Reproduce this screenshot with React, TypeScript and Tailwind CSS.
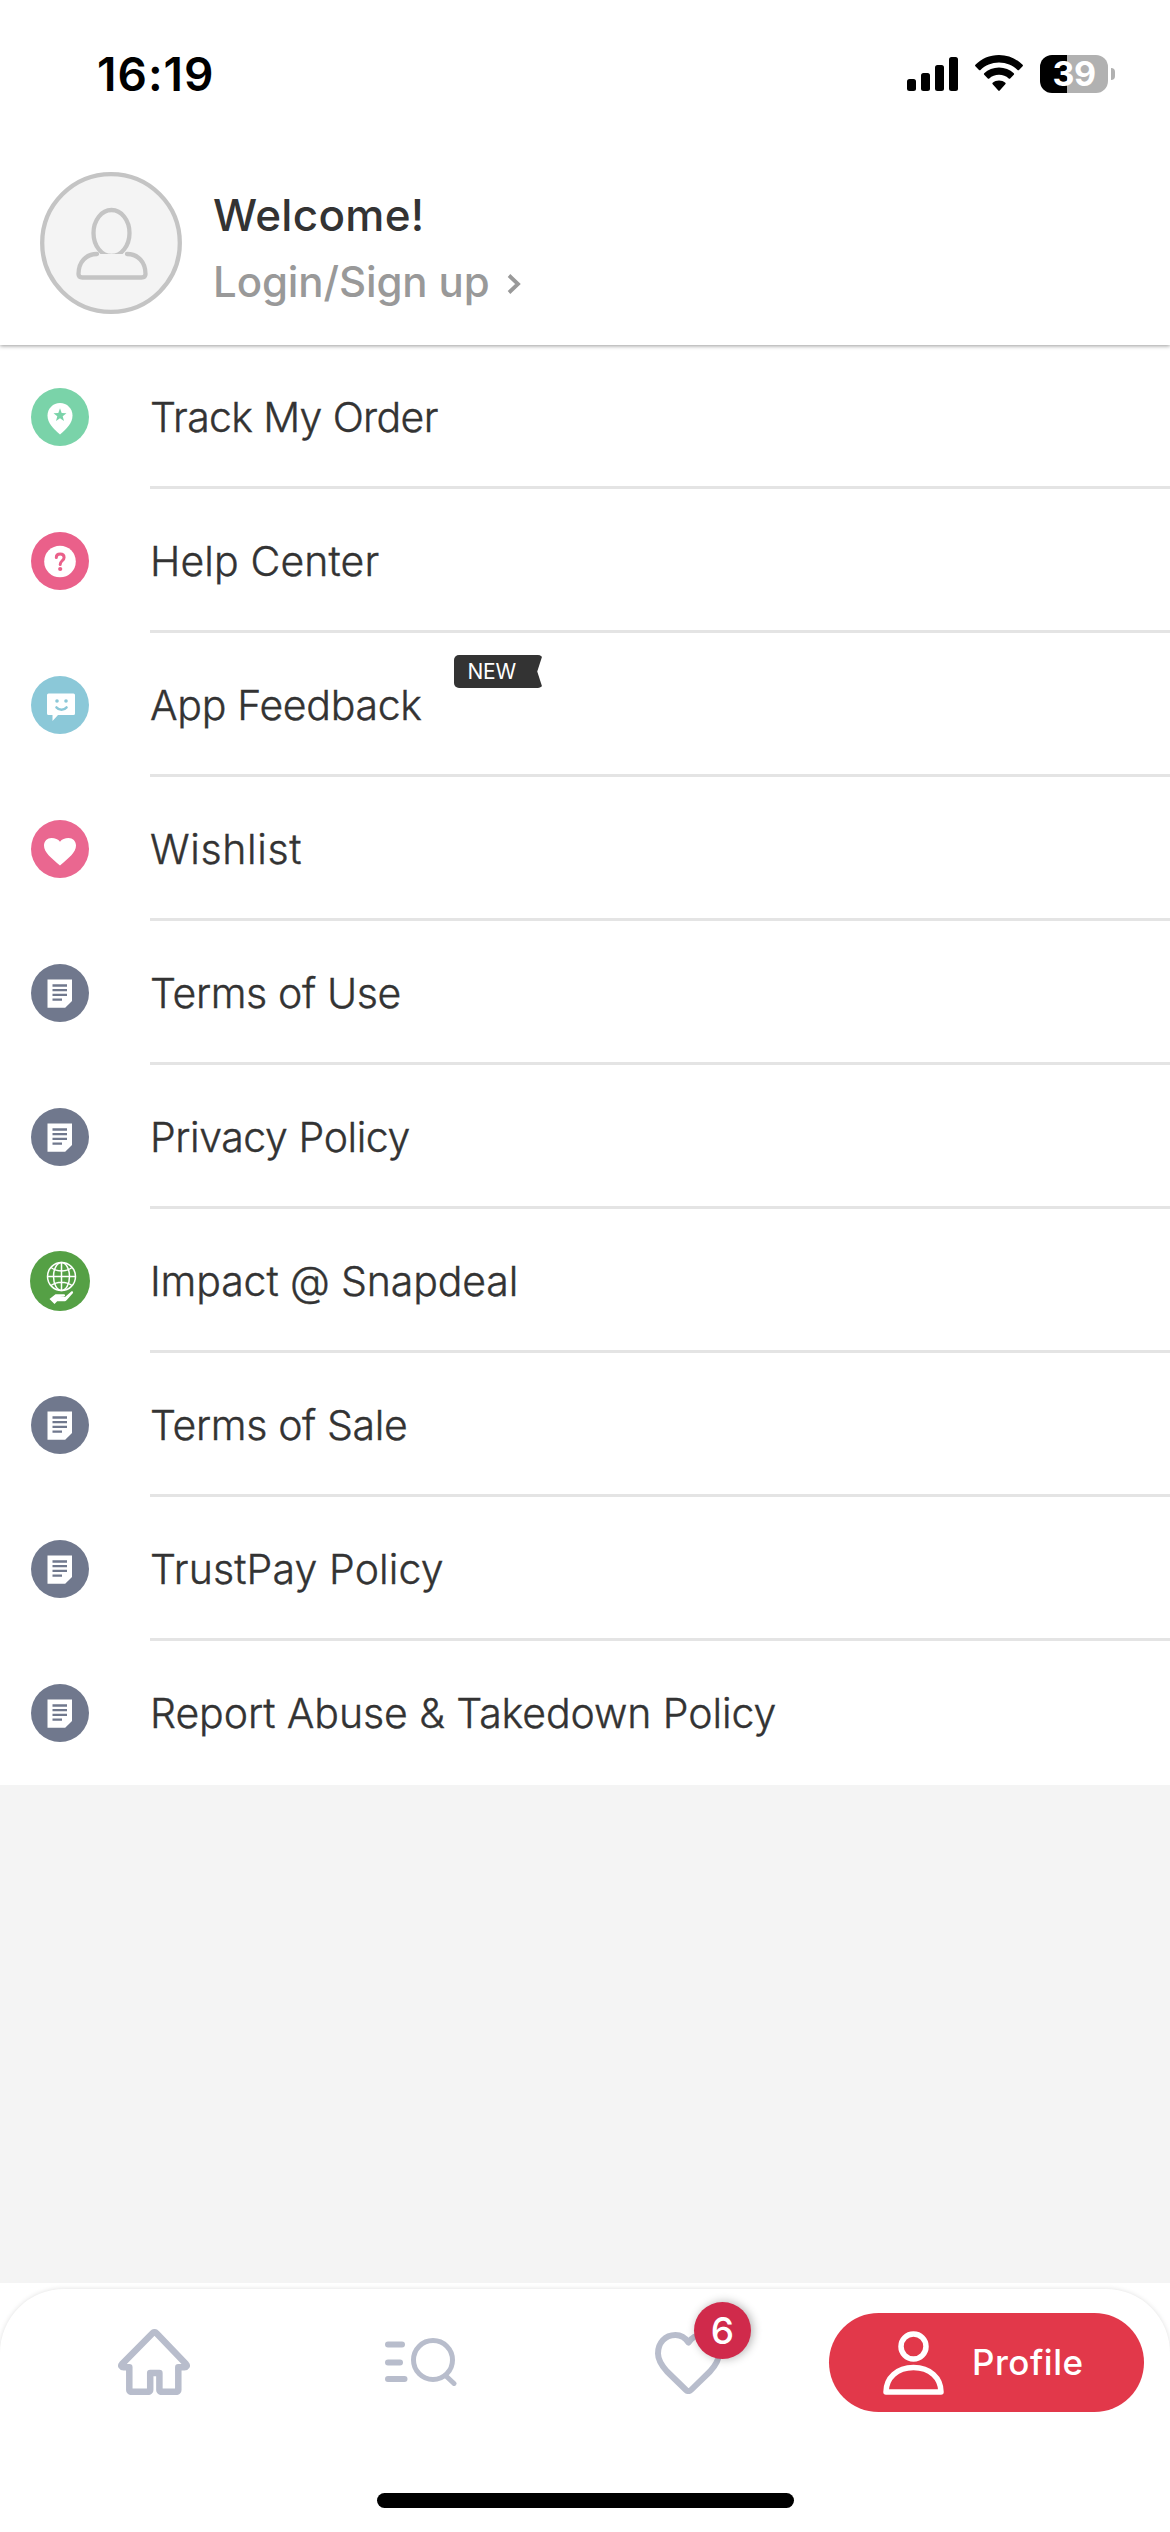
import type { ReactNode } from 'react';

const PinIcon = () => <svg viewBox="0 0 58 58" className="h-[58px] w-[58px]">
    <circle cx="29" cy="29" r="29" fill="#7ad3a9" />
    <path d="M29 15c-7 0-12.500 5.500-12.500 12.500C16.500 35 22 40.500 29 46.500 36 40.500 41.500 35 41.500 27.500 41.500 20.500 36 15 29 15z" fill="#fff" />
    <path d="M29 20.300l1.700 4.700 4.800.2-3.800 3 1.300 4.900-4-2.900-4 2.900 1.300-4.900-3.800-3 4.800-.2z" fill="#7ad3a9" />
  </svg>;

const HelpIcon = () => <svg viewBox="0 0 58 58" className="h-[58px] w-[58px]">
    <circle cx="29" cy="29" r="29" fill="#ea608a" />
    <circle cx="29" cy="29.500" r="15.800" fill="#fff" />
    <path d="M25.300 25.500c0-2.200 1.500-3.600 3.900-3.600 2.300 0 3.900 1.400 3.900 3.500 0 3.200-3.900 3.600-3.900 7" fill="none" stroke="#ea608a" strokeWidth="3" strokeLinecap="round" />
    <circle cx="29.200" cy="37" r="2.100" fill="#ea608a" />
  </svg>;

const FeedbackIcon = () => <svg viewBox="0 0 58 58" className="h-[58px] w-[58px]">
    <circle cx="29" cy="29" r="29" fill="#8bc8d8" />
    <path d="M17.500 17.500h25a1.500 1.500 0 0 1 1.500 1.500v18.500a1.500 1.500 0 0 1-1.500 1.500H27l-5.500 6V39h-4a1.500 1.500 0 0 1-1.500-1.500V19a1.500 1.500 0 0 1 1.500-1.500z" fill="#fff" />
    <circle cx="26" cy="25" r="1.800" fill="#8bc8d8" />
    <circle cx="35" cy="25" r="1.800" fill="#8bc8d8" />
    <path d="M25.500 31.500c2.500 3 7.500 3 10 0" fill="none" stroke="#8bc8d8" strokeWidth="2.600" strokeLinecap="round" />
  </svg>;

const WishlistIcon = () => <svg viewBox="0 0 58 58" className="h-[58px] w-[58px]">
    <circle cx="29" cy="29" r="29" fill="#ea6790" />
    <path d="M29 45.500C20 37.500 13 32.500 13 25.500c0-4.500 3.300-7.500 7.500-7.500 3.500 0 6.700 1.300 8.500 3.700 1.800-2.400 5-3.700 8.500-3.700 4.200 0 7.500 3 7.500 7.500C45 32.500 38 37.500 29 45.500z" fill="#fff" />
  </svg>;

const DocumentIcon = () => <svg viewBox="0 0 58 58" className="h-[58px] w-[58px]">
    <circle cx="29" cy="29" r="29" fill="#70788d" />
    <path d="M16.500 15.500h24.500v21.500l-6.800 6.800H16.500z" fill="#fff" />
    <path d="M21.500 21.500h14.500M21.500 26.200h14.500M21.500 30.900h14.500M21.500 35.600h9.500" stroke="#70788d" strokeWidth="2.300" />
  </svg>;

const ImpactIcon = () => <svg viewBox="0 0 60 60" className="h-[60px] w-[60px]">
    <circle cx="30" cy="30" r="30" fill="#55a045" />
    <g fill="none" stroke="#fff" strokeWidth="1.500">
      <circle cx="31.500" cy="25.500" r="14" />
      <ellipse cx="31.500" cy="25.500" rx="8" ry="14" />
      <path d="M31.500 11.500v28M17.500 25.500h28M21 16.500c6 4.500 15 4.500 21 0M21 34.500c6-4.500 15-4.500 21 0" />
    </g>
    <path d="M19.500 48l6-4.800h8c2 0 2.200 2.300.2 2.500l-4 .3h5.300l6-5.300c1.500-1 2.700.2 1.800 1.600l-6 6.700c-.8.900-1.400 1.200-2.600 1.200h-7L24.500 53z" fill="#fff" />
  </svg>;

const menuItems: { label: string; icon: ReactNode; tracking: string; isNew?: boolean }[] = [{
  label: 'Track My Order',
  icon: <PinIcon />,
  tracking: 'tracking-[-0.65px]'
}, {
  label: 'Help Center',
  icon: <HelpIcon />,
  tracking: 'tracking-[0.12px]'
}, {
  label: 'App Feedback',
  icon: <FeedbackIcon />,
  tracking: 'tracking-[-0.32px]',
  isNew: true
}, {
  label: 'Wishlist',
  icon: <WishlistIcon />,
  tracking: 'tracking-[0.65px]'
}, {
  label: 'Terms of Use',
  icon: <DocumentIcon />,
  tracking: 'tracking-[-0.37px]'
}, {
  label: 'Privacy Policy',
  icon: <DocumentIcon />,
  tracking: 'tracking-[-0.42px]'
}, {
  label: 'Impact @ Snapdeal',
  icon: <ImpactIcon />,
  tracking: 'tracking-[-0.13px]'
}, {
  label: 'Terms of Sale',
  icon: <DocumentIcon />,
  tracking: 'tracking-[-0.35px]'
}, {
  label: 'TrustPay Policy',
  icon: <DocumentIcon />,
  tracking: 'tracking-[0.12px]'
}, {
  label: 'Report Abuse & Takedown Policy',
  icon: <DocumentIcon />,
  tracking: 'tracking-[-0.08px]'
}];

const StatusBar = () => <div className="flex h-[148px] items-start justify-between pl-[97px] pr-[55px] pt-[55px]">
    <span className="text-[46px] font-semibold leading-[38px] tracking-[1px] text-black">16:19</span>
    <div className="flex items-start">
      <svg viewBox="0 0 51 36" className="h-9 w-[51px]">
        <rect x="0" y="24" width="9" height="12" rx="2.500" />
        <rect x="14" y="18" width="9" height="18" rx="2.500" />
        <rect x="28" y="10" width="9" height="26" rx="2.500" />
        <rect x="42" y="2" width="9" height="34" rx="2.500" />
      </svg>
      <svg viewBox="0 0 48 36" className="ml-[17px] h-9 w-12">
        <path d="M24 0C14.700 0 6.400 3.700.4 9.800c-.5.500-.5 1 0 1.500l3.600 3.600c.5.500 1 .5 1.500 0C10.200 10.300 16.700 7.500 24 7.500s13.800 2.800 18.500 7.400c.5.500 1 .5 1.500 0l3.600-3.600c.5-.5.500-1 0-1.500C41.600 3.700 33.300 0 24 0z" />
        <path d="M24 12.500c-5.700 0-10.900 2.200-14.800 5.800-.5.500-.5 1 0 1.500l3.600 3.600c.5.500 1 .5 1.500 0 2.600-2.300 5.900-3.600 9.700-3.600s7.100 1.300 9.700 3.600c.5.500 1 .5 1.500 0l3.600-3.600c.5-.5.500-1 0-1.500-3.900-3.600-9.100-5.800-14.800-5.800z" />
        <path d="M24 25.500c-2.400 0-4.600.8-6.300 2.200-.5.400-.5 1 0 1.500l5.600 6.300c.4.500 1 .5 1.400 0l5.600-6.300c.5-.5.500-1.100 0-1.500-1.700-1.400-3.900-2.200-6.300-2.200z" />
      </svg>
      <div className="ml-[17px] flex h-[38px] w-[68px] items-center justify-center rounded-xl bg-[linear-gradient(to_right,#000_27px,#b1b1b1_27px)]">
        <span className="text-[34px] font-bold leading-none tracking-[-0.5px] text-white">39</span>
      </div>
      <div className="ml-[3px] mt-[13px] h-3 w-1 rounded-r-full bg-[#b1b1b1]" />
    </div>
  </div>;

const Welcome = () => <div className="flex h-[197px] pl-10 pt-6">
    <div className="h-[142px] w-[142px]">
      <svg viewBox="0 0 142 142" fill="#f4f4f4" stroke="#c4c4c4" strokeWidth="4.300">
        <circle cx="71" cy="71" r="68.800" />
        <ellipse cx="71.500" cy="61" rx="18" ry="23" />
        <path d="M57 82c-11 0-18.500 8-18.500 20 0 2.500 1.500 3.500 4 3.500h59c2.500 0 4-1 4-3.500C105.500 90 98 82 87 82" strokeLinecap="round" />
      </svg>
    </div>
    <div className="ml-[31px] flex flex-col pt-[15px]">
      <span className="text-[44px] font-medium leading-[56px] tracking-[0.3px] text-[#333]">Welcome!</span>
      <div className="mt-3 flex items-center">
        <span className="text-[42px] font-medium leading-[54px] tracking-[-0.1px] text-[#999]">Login/Sign up</span>
        <svg viewBox="0 0 14 20" className="ml-[17px] mt-[3px] h-5 w-3.5" fill="none" stroke="#999" strokeWidth="3.800">
          <path d="M2 1.500L11 10l-9 8.500" />
        </svg>
      </div>
    </div>
  </div>;

const BottomNav = () => <div className="h-[249px] overflow-hidden bg-white pt-1.5">
    <div className="h-[243px] rounded-t-[64px] bg-white shadow-[0_0_5px_rgba(0,0,0,0.13)]">
      <div className="flex h-[204px] items-start">
        <svg viewBox="0 0 72 66" className="ml-[118px] mt-10 h-[66px] w-[72px]" fill="none" stroke="#b8bdcc" strokeWidth="6.500" strokeLinejoin="round" strokeLinecap="round">
          <path d="M11.300 38.300H5.500c-2 0-3-1.500-1.500-3.200L34.500 4.200c1.300-1.300 2.700-1.300 4 0L68 35.100c1.500 1.700.5 3.200-1.500 3.200h-6.200V61c0 1-.8 1.800-1.800 1.800H43.200c-1 0-1.800-.8-1.800-1.800V44h-9.200v17c0 1-.8 1.800-1.800 1.800H13.100c-1 0-1.800-.8-1.800-1.800z" />
        </svg>
        <svg viewBox="0 0 72 48" className="ml-[195px] mt-[49px] h-12 w-[72px]" fill="none" stroke="#b8bdcc" strokeLinecap="round">
          <path d="M3 6.500h14M3 24.500h12M3 41h16.500" strokeWidth="6" />
          <circle cx="48" cy="22" r="19.500" strokeWidth="5" />
          <path d="M61 38l8 7.500" strokeWidth="5" />
        </svg>
        <div className="relative ml-[198px] mt-[43px] h-[62px] w-[67px]">
          <svg viewBox="0 0 67 62" fill="none" stroke="#b8bdcc" strokeWidth="6" strokeLinejoin="round">
            <path d="M33.500 10.500C30.500 6 26 3 20.500 3 10 3 3 11 3 21.500c0 7 4 12.500 9 18l19 18.500c1.500 1.500 3.500 1.500 5 0l19-18.500c5-5.500 9-11 9-18C64 11 57 3 46.500 3c-5.500 0-10 3-13 7.500z" />
          </svg>
          <span className="absolute -top-[30px] left-[39px] flex h-[57px] w-[57px] items-center justify-center rounded-full bg-[#d02a4b] text-[37px] font-medium text-white shadow-[2px_0_10px_rgba(0,0,0,0.3)]">6</span>
        </div>
        <button className="ml-[107px] mt-6 flex h-[99px] w-[315px] items-center rounded-full bg-[#e2384a] pl-[54px]">
          <svg viewBox="0 0 61 64" className="h-16 w-[61px]" fill="none" stroke="#fff" strokeWidth="5.500" strokeLinejoin="round">
            <circle cx="30.500" cy="15.500" r="12.500" />
            <path d="M3 61c0-14 11-24.500 27.500-24.500S58 47 58 61z" />
          </svg>
          <span className="ml-7 text-[35px] font-medium tracking-[0.5px] text-white">Profile</span>
        </button>
      </div>
      <div className="mx-auto h-[15px] w-[417px] rounded-full bg-black" />
    </div>
  </div>;

const App = () => {
  return <div className="flex h-[2532px] w-[1170px] flex-col overflow-hidden bg-[#f4f4f4] font-['Inter',sans-serif]">
      <div className="relative bg-white shadow-[0_1px_4px_rgba(0,0,0,0.4)]">
        <StatusBar />
        <Welcome />
      </div>
      {/* Menu */}
      <div className="bg-white">
        {menuItems.map(item => <div key={item.label} className="group flex h-36 items-center">
            <div className="flex w-[150px] items-center justify-center pr-[30px]">{item.icon}</div>
            <div className="flex h-36 flex-1 items-center border-b-[3px] border-[#e4e4e4] group-last:border-transparent">
              <span className={`whitespace-nowrap pt-1 text-[41px] font-light text-[#333] [-webkit-text-stroke:0.4px_#333] ${item.tracking}`}>{item.label}</span>
              {item.isNew && <div className="mb-16 ml-8 flex h-[33px] w-[89px] items-center rounded-[5px] bg-[#333] pl-3.5 [clip-path:polygon(0_0,100%_0,94%_50%,100%_100%,0_100%)]">
                  <span className="text-[21px] tracking-[-0.3px] text-white">NEW</span>
                </div>}
            </div>
          </div>)}
      </div>
      <div className="flex-1" />
      <BottomNav />
    </div>;
};
export default App;
